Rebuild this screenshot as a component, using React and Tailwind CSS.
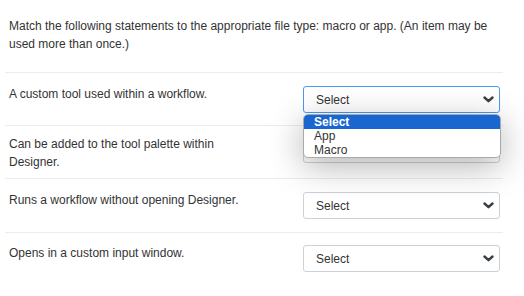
import React from 'react';

const Chevron = () => (
  <svg width="11" height="7" viewBox="0 0 11 7" className="shrink-0">
    <path d="M1.5 1.5 L5.5 5.2 L9.5 1.5" fill="none" stroke="#3a3f45" strokeWidth="2.4" strokeLinecap="round" strokeLinejoin="round" />
  </svg>
);

const SelectBox = ({ active }) => (
  <div
    className={`mt-[1px] ml-auto w-[197px] h-[27px] shrink-0 rounded-[3px] border flex items-center pl-[12px] pr-[5px] text-[12px] text-[#333] ${
      active ? 'border-[#4a9af0] bg-white' : 'border-[#cdd2d8] bg-white'
    }`}
  >
    <span className="flex-1">Select</span>
    <Chevron />
  </div>
);

const App = () => {
  const rows = [
    { text: 'A custom tool used within a workflow.', cls: 'pt-[12px] pb-[12px]', active: true },
    { text: 'Can be added to the tool palette within Designer.', cls: 'pt-[9px] pb-[7px]' },
    { text: 'Runs a workflow without opening Designer.', cls: 'pt-[12px] pb-[13px]' },
    { text: 'Opens in a custom input window.', cls: 'pt-[11px] pb-[20px]' },
  ];

  return (
    <div className="w-[524px] h-[296px] bg-white overflow-hidden font-['Liberation_Sans',Arial,sans-serif] text-[#333]">
      <div className="ml-[5px] w-[498px] pt-[17px]">
        <p className="px-[4px] text-[12px] leading-[18px] mb-[19px]">
          Match the following statements to the appropriate file type: macro or app. (An item may be used more than once.)
        </p>

        {rows.map((r, i) => (
          <div key={i} className={`relative border-t border-[#ececec] flex items-start pl-[4px] pr-[3px] ${r.cls}`}>
            <div className="w-[240px] text-[12px] leading-[18px]">{r.text}</div>
            <SelectBox active={r.active} />

            {r.active && (
              <div className="absolute z-10 left-[298px] top-[41px] w-[198px] rounded-[5px] border border-[#a9a9a9] bg-white shadow-[0_8px_34px_rgba(0,0,0,0.3)] overflow-hidden text-[12px] leading-[14px]">
                <div className="bg-[#1a66d0] text-white pl-[10px] font-bold">Select</div>
                <div className="pl-[10px] text-[#333]">App</div>
                <div className="pl-[10px] text-[#333]">Macro</div>
              </div>
            )}
          </div>
        ))}
      </div>
    </div>
  );
};

export default App;
